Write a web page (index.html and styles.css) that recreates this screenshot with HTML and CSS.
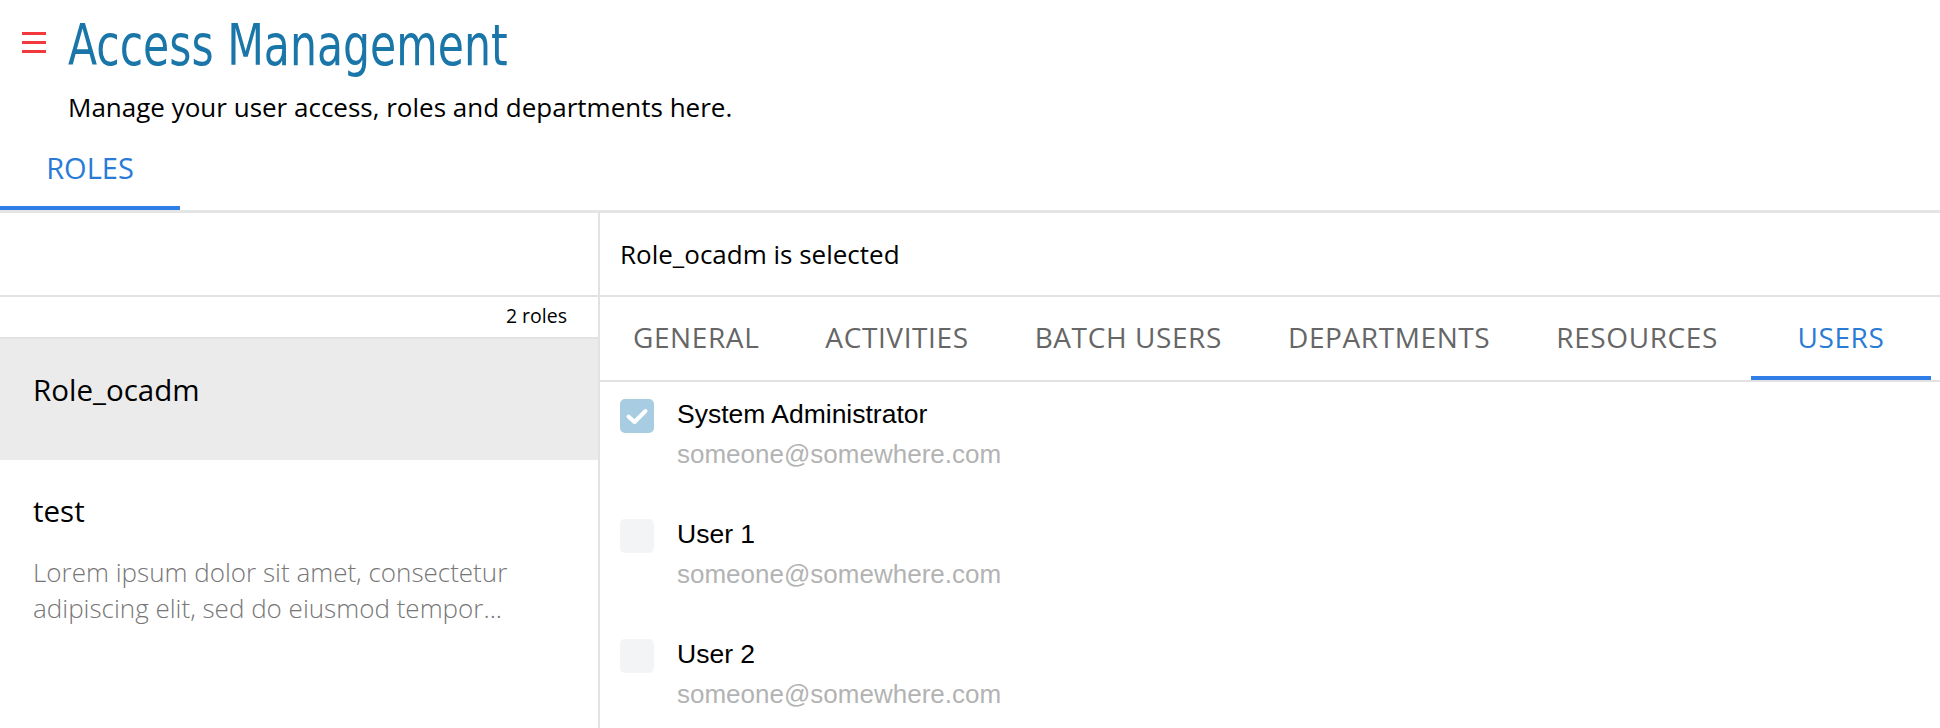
FILE: index.html
```html
<!DOCTYPE html>
<html lang="en">
<head>
<meta charset="utf-8">
<title>Access Management</title>
<link rel="stylesheet" href="styles.css">
</head>
<body>
<div class="page">
  <header class="header">
    <div class="title-row">
      <svg class="menu" viewBox="0 0 24 21" aria-hidden="true">
        <rect x="0" y="0" width="24" height="3" fill="#f2393b"/>
        <rect x="0" y="9" width="24" height="3" fill="#f2393b"/>
        <rect x="0" y="18" width="24" height="3" fill="#f2393b"/>
      </svg>
      <h1 class="title">Access Management</h1>
    </div>
    <p class="subtitle">Manage your user access, roles and departments here.</p>
    <nav class="top-tabs">
      <div class="top-tab active">ROLES</div>
    </nav>
  </header>
  <main class="main">
    <aside class="roles-panel">
      <div class="panel-head"></div>
      <div class="roles-count">2 roles</div>
      <ul class="role-list">
        <li class="role-item selected">
          <div class="role-name">Role_ocadm</div>
          <div class="role-desc"></div>
        </li>
        <li class="role-item">
          <div class="role-name">test</div>
          <div class="role-desc">Lorem ipsum dolor sit amet, consectetur adipiscing elit, sed do eiusmod tempor...</div>
        </li>
      </ul>
    </aside>
    <section class="detail">
      <div class="panel-head detail-head">Role_ocadm is selected</div>
      <nav class="detail-tabs">
        <div class="detail-tab">GENERAL</div>
        <div class="detail-tab">ACTIVITIES</div>
        <div class="detail-tab">BATCH USERS</div>
        <div class="detail-tab">DEPARTMENTS</div>
        <div class="detail-tab">RESOURCES</div>
        <div class="detail-tab active">USERS</div>
      </nav>
      <ul class="user-list">
        <li class="user">
          <span class="checkbox checked">
            <svg viewBox="0 0 34 34" aria-hidden="true"><path d="M8.5 17.5 L14.5 23 L25.5 12" fill="none" stroke="#fff" stroke-width="4" stroke-linecap="round" stroke-linejoin="round"/></svg>
          </span>
          <div class="user-info">
            <div class="user-name">System Administrator</div>
            <div class="user-email">someone@somewhere.com</div>
          </div>
        </li>
        <li class="user">
          <span class="checkbox"></span>
          <div class="user-info">
            <div class="user-name">User 1</div>
            <div class="user-email">someone@somewhere.com</div>
          </div>
        </li>
        <li class="user">
          <span class="checkbox"></span>
          <div class="user-info">
            <div class="user-name">User 2</div>
            <div class="user-email">someone@somewhere.com</div>
          </div>
        </li>
      </ul>
    </section>
  </main>
</div>
</body>
</html>
```
FILE: styles.css
```css
* {
  box-sizing: border-box;
  margin: 0;
  padding: 0;
}

html,
body {
  height: 100%;
}

body {
  font-family: "Open Sans", sans-serif;
  color: #000;
  background: #fff;
  overflow: hidden;
}

.page {
  display: flex;
  flex-direction: column;
  height: 100vh;
}

.title-row {
  display: flex;
  align-items: flex-start;
  gap: 22px;
  padding: 13px 0 0 22px;
}

.menu {
  flex: none;
  width: 24px;
  height: 21px;
  margin-top: 19px;
}

.title {
  font-family: "DejaVu Sans Condensed", "DejaVu Sans", sans-serif;
  font-weight: 400;
  font-size: 57px;
  line-height: 64px;
  color: #1a76a8;
  transform: scaleX(0.83);
  transform-origin: left center;
  white-space: nowrap;
}

.subtitle {
  margin-top: 13px;
  padding-left: 68px;
  font-size: 26px;
  line-height: 34px;
}

.top-tabs {
  display: flex;
  border-bottom: 3px solid #e4e5e7;
}

.top-tab {
  min-width: 180px;
  text-align: center;
  padding: 24px 0 18px;
  font-size: 29px;
  line-height: 40px;
  color: #2a7bd6;
  border-bottom: 4px solid #2f7de6;
}

.main {
  flex: 1;
  display: flex;
  min-height: 0;
}

.roles-panel {
  flex: none;
  width: 600px;
  border-right: 2px solid #e2e2e2;
}

.panel-head {
  height: 84px;
  border-bottom: 2px solid #e2e2e2;
}

.detail-head {
  display: flex;
  align-items: center;
  padding-left: 20px;
  font-size: 26px;
  line-height: 36px;
}

.roles-count {
  height: 42px;
  padding-right: 31px;
  text-align: right;
  font-size: 19.5px;
  line-height: 37px;
  border-bottom: 2px solid #e2e2e2;
}

.role-list {
  list-style: none;
}

.role-item {
  padding: 31px 33px 27px;
}

.role-item.selected {
  background: #ebebeb;
}

.role-name {
  font-size: 29.5px;
  line-height: 40px;
}

.role-desc {
  margin-top: 23px;
  font-size: 26px;
  font-weight: 300;
  line-height: 36px;
  color: #777;
}

.detail {
  flex: 1;
  min-width: 0;
}

.detail-tabs {
  display: flex;
  border-bottom: 2px solid #e2e2e2;
}

.detail-tab {
  min-width: 180px;
  text-align: center;
  white-space: nowrap;
  padding: 21px 33px 20px;
  font-size: 28px;
  line-height: 38px;
  letter-spacing: 0.6px;
  color: #666;
  border-bottom: 4px solid transparent;
}

.detail-tab.active {
  color: #2a7bd6;
  border-bottom-color: #2f7de6;
}

.user-list {
  list-style: none;
  padding: 17px 20px 0;
}

.user {
  display: flex;
  gap: 23px;
  height: 120px;
}

.checkbox {
  flex: none;
  display: block;
  width: 34px;
  height: 34px;
  border-radius: 5px;
  background: #f3f4f6;
}

.checkbox.checked {
  background: #a8cde2;
}

.checkbox svg {
  display: block;
  width: 34px;
  height: 34px;
}

.user-name {
  font-family: "Liberation Sans", Arial, sans-serif;
  font-size: 26.5px;
  line-height: 30px;
  color: #000;
}

.user-email {
  margin-top: 10px;
  font-family: "Liberation Sans", Arial, sans-serif;
  font-size: 26px;
  line-height: 30px;
  color: #b3b3b3;
}
```
